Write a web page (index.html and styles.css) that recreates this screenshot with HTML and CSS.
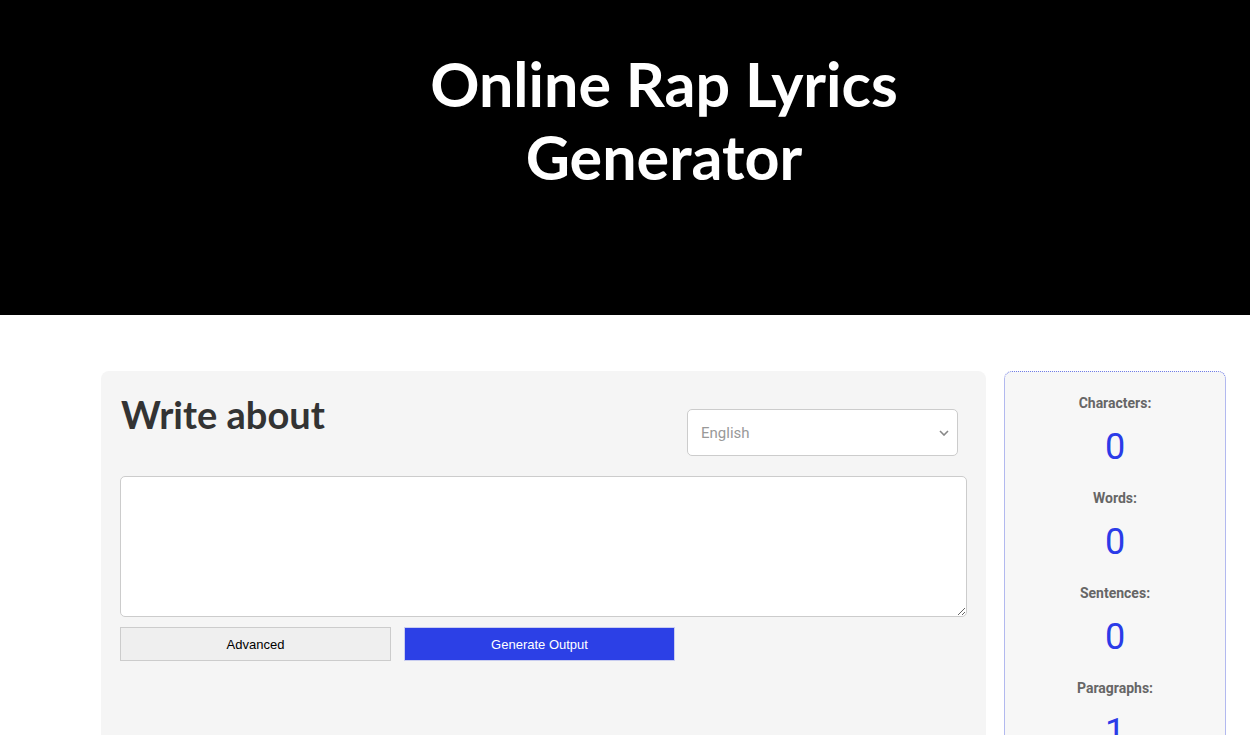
FILE: index.html
```html
<!DOCTYPE html>
<html lang="en">
<head>
<meta charset="utf-8">
<title>Online Rap Lyrics Generator</title>
<link rel="stylesheet" href="styles.css">
</head>
<body>
<header class="hero">
  <h1 class="hero-title">Online Rap Lyrics Generator</h1>
</header>
<main class="content">
  <section class="card">
    <div class="card-head">
      <h2 class="card-title">Write about</h2>
      <div class="select-wrap">
        <select class="lang-select">
          <option>English</option>
        </select>
        <svg class="chev" width="10" height="6" viewBox="0 0 10 6"><path d="M1 1l4 4 4-4" fill="none" stroke="#888" stroke-width="1.6"/></svg>
      </div>
    </div>
    <textarea class="topic"></textarea>
    <div class="actions">
      <button class="btn btn-adv">Advanced</button>
      <button class="btn btn-gen">Generate Output</button>
    </div>
  </section>
  <aside class="stats">
    <div class="stat"><div class="stat-label">Characters:</div><div class="stat-num">0</div></div>
    <div class="stat"><div class="stat-label">Words:</div><div class="stat-num">0</div></div>
    <div class="stat"><div class="stat-label">Sentences:</div><div class="stat-num">0</div></div>
    <div class="stat"><div class="stat-label">Paragraphs:</div><div class="stat-num">1</div></div>
  </aside>
</main>
</body>
</html>
```

FILE: styles.css
```css
* { box-sizing: border-box; }
html, body { margin: 0; padding: 0; }
body {
  background: #fff;
  font-family: Roboto, "Liberation Sans", sans-serif;
  overflow: hidden;
  height: 735px;
}
.hero {
  background: #000;
  height: 315px;
  display: flex;
  justify-content: center;
  padding-left: 78px;
  padding-top: 47px;
}
.hero-title {
  margin: 0;
  width: 520px;
  text-align: center;
  color: #fff;
  font-family: Lato, "Open Sans", sans-serif;
  font-weight: 700;
  font-size: 61px;
  line-height: 73px;
}
.content {
  display: flex;
  align-items: flex-start;
  gap: 18px;
  padding: 56px 24px 0 101px;
}
.card {
  width: 885px;
  height: 420px;
  background: #f5f5f5;
  border-radius: 8px;
  padding: 19px 19px 0 19px;
}
.card-head {
  display: flex;
  justify-content: space-between;
  align-items: flex-start;
  height: 86px;
}
.card-title {
  margin: 1px 0 0 1px;
  color: #333;
  font-family: Lato, "Open Sans", sans-serif;
  font-weight: 700;
  font-size: 38px;
  line-height: 46px;
}
.select-wrap {
  position: relative;
  margin-top: 19px;
  margin-right: 9px;
}
.lang-select {
  appearance: none;
  -webkit-appearance: none;
  width: 271px;
  height: 47px;
  border: 1px solid #ccc;
  border-radius: 5px;
  background: #fff;
  color: #999;
  font-family: Roboto, sans-serif;
  font-size: 15px;
  padding: 0 13px;
}
.chev {
  position: absolute;
  right: 9px;
  top: 21px;
}
.topic {
  display: block;
  width: 847px;
  height: 141px;
  border: 1px solid #ccc;
  border-radius: 5px;
  background: #fff;
  resize: vertical;
}
.actions {
  display: flex;
  gap: 13px;
  margin-top: 10px;
}
.btn {
  width: 271px;
  height: 34px;
  border: 1px solid #ccc;
  font-family: "Liberation Sans", Arial, sans-serif;
  font-size: 13px;
}
.btn-adv { background: #efefef; color: #000; }
.btn-gen { background: #2c40e6; color: #fff; border-color: #c9cdf0; }
.stats {
  width: 222px;
  height: 420px;
  background: #f7f7f7;
  border: 1px dotted #6f7ce8;
  border-radius: 8px;
  padding-top: 21px;
  text-align: center;
}
.stat { margin-bottom: 19px; }
.stat-label {
  color: #666;
  font-weight: 700;
  font-size: 14px;
  line-height: 20px;
}
.stat-num {
  margin-top: 12px;
  color: #2b3be8;
  font-size: 36px;
  line-height: 44px;
}
```
